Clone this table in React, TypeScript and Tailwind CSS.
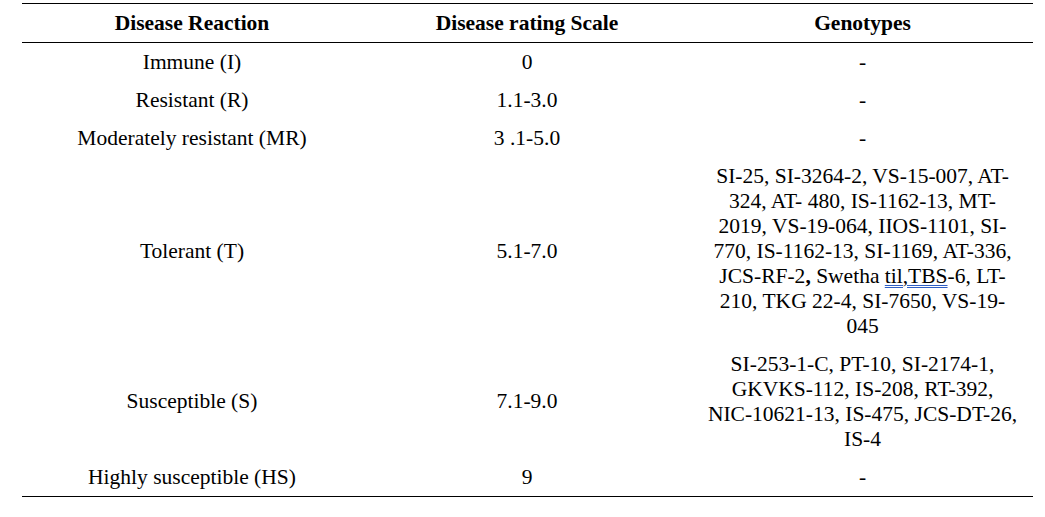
import React from 'react';

type Row = {
  reaction: string;
  scale: string;
  genotypes: React.ReactNode[];
};

const rows: Row[] = [
  { reaction: 'Immune (I)', scale: '0', genotypes: ['-'] },
  { reaction: 'Resistant (R)', scale: '1.1-3.0', genotypes: ['-'] },
  { reaction: 'Moderately resistant (MR)', scale: '3 .1-5.0', genotypes: ['-'] },
  {
    reaction: 'Tolerant (T)',
    scale: '5.1-7.0',
    genotypes: [
      'SI-25, SI-3264-2, VS-15-007, AT-',
      '324, AT- 480, IS-1162-13, MT-',
      '2019, VS-19-064, IIOS-1101, SI-',
      '770, IS-1162-13, SI-1169, AT-336,',
      <>
        JCS-RF-2<span className="font-bold">,</span> Swetha{' '}
        <span className="underline decoration-double decoration-[#2f5fc4] decoration-1 underline-offset-2">
          til,TBS
        </span>
        -6, LT-
      </>,
      '210, TKG 22-4, SI-7650, VS-19-',
      '045',
    ],
  },
  {
    reaction: 'Susceptible (S)',
    scale: '7.1-9.0',
    genotypes: [
      'SI-253-1-C, PT-10, SI-2174-1,',
      'GKVKS-112, IS-208, RT-392,',
      'NIC-10621-13, IS-475, JCS-DT-26,',
      'IS-4',
    ],
  },
  { reaction: 'Highly susceptible (HS)', scale: '9', genotypes: ['-'] },
];

export default function App() {
  return (
    <div className="w-[1045px] h-[517px] bg-white pt-[3px] pl-[22px] font-[family-name:'Liberation_Serif','Times_New_Roman',serif] text-[21.5px] leading-[25px] text-black">
      <table className="w-[1011px] border-collapse table-fixed">
        <colgroup>
          <col className="w-[340px]" />
          <col className="w-[330px]" />
          <col className="w-[341px]" />
        </colgroup>
        <thead>
          <tr className="border-t-[1.5px] border-b-[1.5px] border-black">
            <th className="py-[6.5px] px-2 font-bold text-center">Disease Reaction</th>
            <th className="py-[6.5px] px-2 font-bold text-center">Disease rating Scale</th>
            <th className="py-[6.5px] px-2 font-bold text-center">Genotypes</th>
          </tr>
        </thead>
        <tbody>
          {rows.map((row, i) => (
            <tr
              key={row.reaction}
              className={i === rows.length - 1 ? 'border-b-[1.5px] border-black' : ''}
            >
              <td className="py-[6.5px] px-2 text-center align-middle">{row.reaction}</td>
              <td className="py-[6.5px] px-2 text-center align-middle">{row.scale}</td>
              <td className="py-[6.5px] px-[10px] text-center align-middle">
                {row.genotypes.map((g, j) => (
                  <div key={j} className="whitespace-nowrap">
                    {g}
                  </div>
                ))}
              </td>
            </tr>
          ))}
        </tbody>
      </table>
    </div>
  );
}
